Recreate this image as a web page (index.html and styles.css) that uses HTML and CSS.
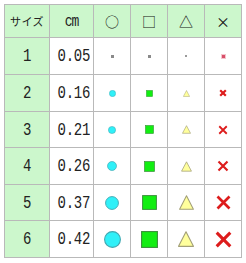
FILE: index.html
```html
<!DOCTYPE html>
<html lang="ja">
<head>
<meta charset="utf-8">
<title>サイズ表</title>
<link rel="stylesheet" href="styles.css">
</head>
<body>
<div class="sheet">
  <div class="cell head">サイズ</div>
  <div class="cell head"><span class="unit">cm</span></div>
  <div class="cell head sym">○</div>
  <div class="cell head sym">□</div>
  <div class="cell head sym">△</div>
  <div class="cell head sym">×</div>

  <div class="cell side"><span class="num">1</span></div>
  <div class="cell val"><span class="num">0.05</span></div>
  <div class="cell mark"><span class="dot grey"></span></div>
  <div class="cell mark"><span class="dot grey"></span></div>
  <div class="cell mark"><span class="dot grey small"></span></div>
  <div class="cell mark"><span class="dot pink"></span></div>

  <div class="cell side"><span class="num">2</span></div>
  <div class="cell val"><span class="num">0.16</span></div>
  <div class="cell mark"><svg width="7" height="7" viewBox="0 0 20 20"><circle class="c" cx="10" cy="10" r="9"/></svg></div>
  <div class="cell mark"><svg width="7" height="7" viewBox="0 0 20 20"><rect class="s" x="1" y="1" width="18" height="18"/></svg></div>
  <div class="cell mark"><svg width="7" height="7" viewBox="0 0 20 20"><polygon class="t" points="10,1.5 19,18.5 1,18.5"/></svg></div>
  <div class="cell mark"><svg width="8" height="8" viewBox="0 0 20 20"><path class="x bold" d="M3 3L17 17M17 3L3 17"/></svg></div>

  <div class="cell side"><span class="num">3</span></div>
  <div class="cell val"><span class="num">0.21</span></div>
  <div class="cell mark"><svg width="8" height="8" viewBox="0 0 20 20"><circle class="c" cx="10" cy="10" r="9"/></svg></div>
  <div class="cell mark"><svg width="9" height="9" viewBox="0 0 20 20"><rect class="s" x="1" y="1" width="18" height="18"/></svg></div>
  <div class="cell mark"><svg width="9" height="9" viewBox="0 0 20 20"><polygon class="t" points="10,1.5 19,18.5 1,18.5"/></svg></div>
  <div class="cell mark"><svg width="10" height="10" viewBox="0 0 20 20"><path class="x" d="M2.5 2.5L17.5 17.5M17.5 2.5L2.5 17.5"/></svg></div>

  <div class="cell side"><span class="num">4</span></div>
  <div class="cell val"><span class="num">0.26</span></div>
  <div class="cell mark"><svg width="10" height="10" viewBox="0 0 20 20"><circle class="c" cx="10" cy="10" r="9"/></svg></div>
  <div class="cell mark"><svg width="11" height="11" viewBox="0 0 20 20"><rect class="s" x="1" y="1" width="18" height="18"/></svg></div>
  <div class="cell mark"><svg width="11" height="11" viewBox="0 0 20 20"><polygon class="t" points="10,1.5 19,18.5 1,18.5"/></svg></div>
  <div class="cell mark"><svg width="12" height="12" viewBox="0 0 20 20"><path class="x" d="M2.5 2.5L17.5 17.5M17.5 2.5L2.5 17.5"/></svg></div>

  <div class="cell side"><span class="num">5</span></div>
  <div class="cell val"><span class="num">0.37</span></div>
  <div class="cell mark"><svg width="14" height="14" viewBox="0 0 20 20"><circle class="c" cx="10" cy="10" r="9.2"/></svg></div>
  <div class="cell mark"><svg width="15" height="15" viewBox="0 0 20 20"><rect class="s" x="0.8" y="0.8" width="18.4" height="18.4"/></svg></div>
  <div class="cell mark"><svg width="15" height="15" viewBox="0 0 20 20"><polygon class="t" points="10,1 19.2,19 0.8,19"/></svg></div>
  <div class="cell mark"><svg width="15" height="15" viewBox="0 0 20 20"><path class="x" d="M2 2L18 18M18 2L2 18"/></svg></div>

  <div class="cell side"><span class="num">6</span></div>
  <div class="cell val"><span class="num">0.42</span></div>
  <div class="cell mark"><svg width="17" height="17" viewBox="0 0 20 20"><circle class="c" cx="10" cy="10" r="9.3"/></svg></div>
  <div class="cell mark"><svg width="17" height="17" viewBox="0 0 20 20"><rect class="s" x="0.7" y="0.7" width="18.6" height="18.6"/></svg></div>
  <div class="cell mark"><svg width="16" height="16" viewBox="0 0 20 20"><polygon class="t" points="10,1 19.3,19.2 0.7,19.2"/></svg></div>
  <div class="cell mark"><svg width="17" height="17" viewBox="0 0 20 20"><path class="x" d="M2 2L18 18M18 2L2 18"/></svg></div>
</div>
</body>
</html>
```
FILE: styles.css
```css
html, body {
  margin: 0;
  padding: 0;
  background: #ffffff;
}
body {
  padding: 4px;
  font-family: "Liberation Mono", "DejaVu Sans Mono", monospace;
  color: #222222;
}
.sheet {
  display: grid;
  grid-template-columns: 44px 43px 36px 36px 36px 36px;
  grid-template-rows: 32px 36px 36px 35px 36px 35px 36px;
  gap: 1px;
  padding: 1px;
  width: 236px;
  background: #b9b9b9;
}
.cell {
  background: #ffffff;
  display: flex;
  align-items: center;
  justify-content: center;
}
.head, .side {
  background: #ccf7cc;
}
.head {
  font-family: "Noto Sans CJK JP", sans-serif;
  font-size: 11px;
  letter-spacing: 0.5px;
}
.unit {
  font-family: "Liberation Mono", monospace;
  font-size: 13px;
  letter-spacing: -1px;
  display: inline-block;
  transform: scaleY(1.3);
}
.sym {
  font-size: 14px;
  letter-spacing: 0;
  color: #111111;
}
.num {
  display: inline-block;
  font-size: 14px;
  letter-spacing: -0.3px;
  transform: scaleY(1.35);
}
.val {
  justify-content: flex-end;
  padding-right: 3px;
}
.mark svg {
  display: block;
}
.c {
  fill: #2ff0f8;
  stroke: #43a7b0;
  stroke-width: 1.3;
}
.s {
  fill: #12ee12;
  stroke: #3b8f3b;
  stroke-width: 1.3;
}
.t {
  fill: #ffff9c;
  stroke: #a3a078;
  stroke-width: 1.4;
  stroke-linejoin: round;
}
.x {
  stroke: #dd1c1c;
  stroke-width: 3.6;
  fill: none;
}
.x.bold {
  stroke-width: 5.5;
}
.dot {
  width: 3px;
  height: 3px;
  background: #8a8a8a;
}
.dot.small {
  width: 2px;
  height: 2px;
  background: #9a9a9a;
}
.dot.pink {
  background: #d8506a;
  box-shadow: 0 0 0 1px #f4c4cc;
}
```
